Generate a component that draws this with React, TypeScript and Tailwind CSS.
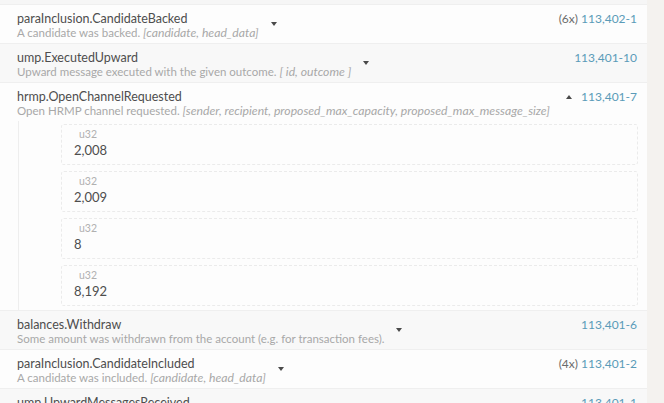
import { Fragment } from "react";

type EventRow = {
  name: string;
  desc: string;
  params: string;
  count?: string;
  block: string;
  open?: boolean;
};

const events: EventRow[] = [
  {
    name: "paraInclusion.CandidateBacked",
    desc: "A candidate was backed.",
    params: "[candidate, head_data]",
    count: "(6x)",
    block: "113,402-1",
  },
  {
    name: "ump.ExecutedUpward",
    desc: "Upward message executed with the given outcome.",
    params: "[ id, outcome ]",
    block: "113,401-10",
  },
  {
    name: "hrmp.OpenChannelRequested",
    desc: "Open HRMP channel requested.",
    params: "[sender, recipient, proposed_max_capacity, proposed_max_message_size]",
    block: "113,401-7",
    open: true,
  },
  {
    name: "balances.Withdraw",
    desc: "Some amount was withdrawn from the account (e.g. for transaction fees).",
    params: "",
    block: "113,401-6",
  },
  {
    name: "paraInclusion.CandidateIncluded",
    desc: "A candidate was included.",
    params: "[candidate, head_data]",
    count: "(4x)",
    block: "113,401-2",
  },
  {
    name: "ump.UpwardMessagesReceived",
    desc: "Some upward messages have been received and will be processed.",
    params: "",
    block: "113,401-1",
  },
];

const values = ["2,008", "2,009", "8", "8,192"];

function Caret({ up }: { up?: boolean }) {
  return (
    <svg width="8" height="6" viewBox="0 0 8 6" className="shrink-0">
      {up ? (
        <path d="M4 1 L7 5 L1 5 Z" fill="#4a4a4a" />
      ) : (
        <path d="M1 1 L7 1 L4 5 Z" fill="#4a4a4a" />
      )}
    </svg>
  );
}

export default function App() {
  return (
    <div
      className="flex w-[664px] h-[403px] overflow-hidden bg-[#f4f2ef]"
      style={{ fontFamily: "Lato, 'Open Sans', sans-serif" }}
    >
      <div className="w-[647px] shrink-0 bg-white flex flex-col">
        <div className="h-[5px] shrink-0 bg-[#f6f6f6] border-b border-[#efefef]" />
        {events.map((ev, i) => (
          <Fragment key={i}>
            <div
              className={`shrink-0 border-b border-[#efefef] ${
                i % 2 === 0 ? "bg-[#fdfdfd]" : "bg-[#f8f8f8]"
              }`}
            >
              <div className="flex items-start pl-[17px] pr-[10px] pt-[6px] pb-[4px]">
                <div className="flex-1 flex items-center min-w-0">
                  <div className="min-w-0">
                    <div className="text-[12.5px] leading-[15px] text-[#4e4e4e] whitespace-nowrap">
                      {ev.name}
                    </div>
                    <div className="text-[11.5px] leading-[13px] text-[#a8a8a8] whitespace-nowrap">
                      {ev.desc}{" "}
                      {ev.params && <span className="italic text-[12.2px]">{ev.params}</span>}
                    </div>
                  </div>
                  <div className={`${ev.open ? "ml-[15px] -mt-[12px]" : "ml-[11px] -mt-[2px]"}`}>
                    <Caret up={ev.open} />
                  </div>
                </div>
                <div className="text-[12px] leading-[15px] whitespace-nowrap shrink-0">
                  {ev.count && <span className="text-[#6b6b6b]">{ev.count} </span>}
                  <span className="text-[#5a9bb8]">{ev.block}</span>
                </div>
              </div>
              {ev.open && (
                <div className="ml-[18px] border-l border-[#eeeeee] pt-[3px] pb-[4px] pl-[42px] pr-[9px] flex flex-col gap-[6px]">
                  {values.map((v) => (
                    <div
                      key={v}
                      className="h-[41px] border border-dashed border-[#ebebeb] rounded-[3px] pl-[12px] pt-[3px]"
                    >
                      <div className="pl-[5px] text-[10.5px] leading-[13px] text-[#b0b0b0]">u32</div>
                      <div className="text-[13px] leading-[19px] text-[#4e4e4e]">{v}</div>
                    </div>
                  ))}
                </div>
              )}
            </div>
          </Fragment>
        ))}
      </div>
      <div className="flex-1" />
    </div>
  );
}
